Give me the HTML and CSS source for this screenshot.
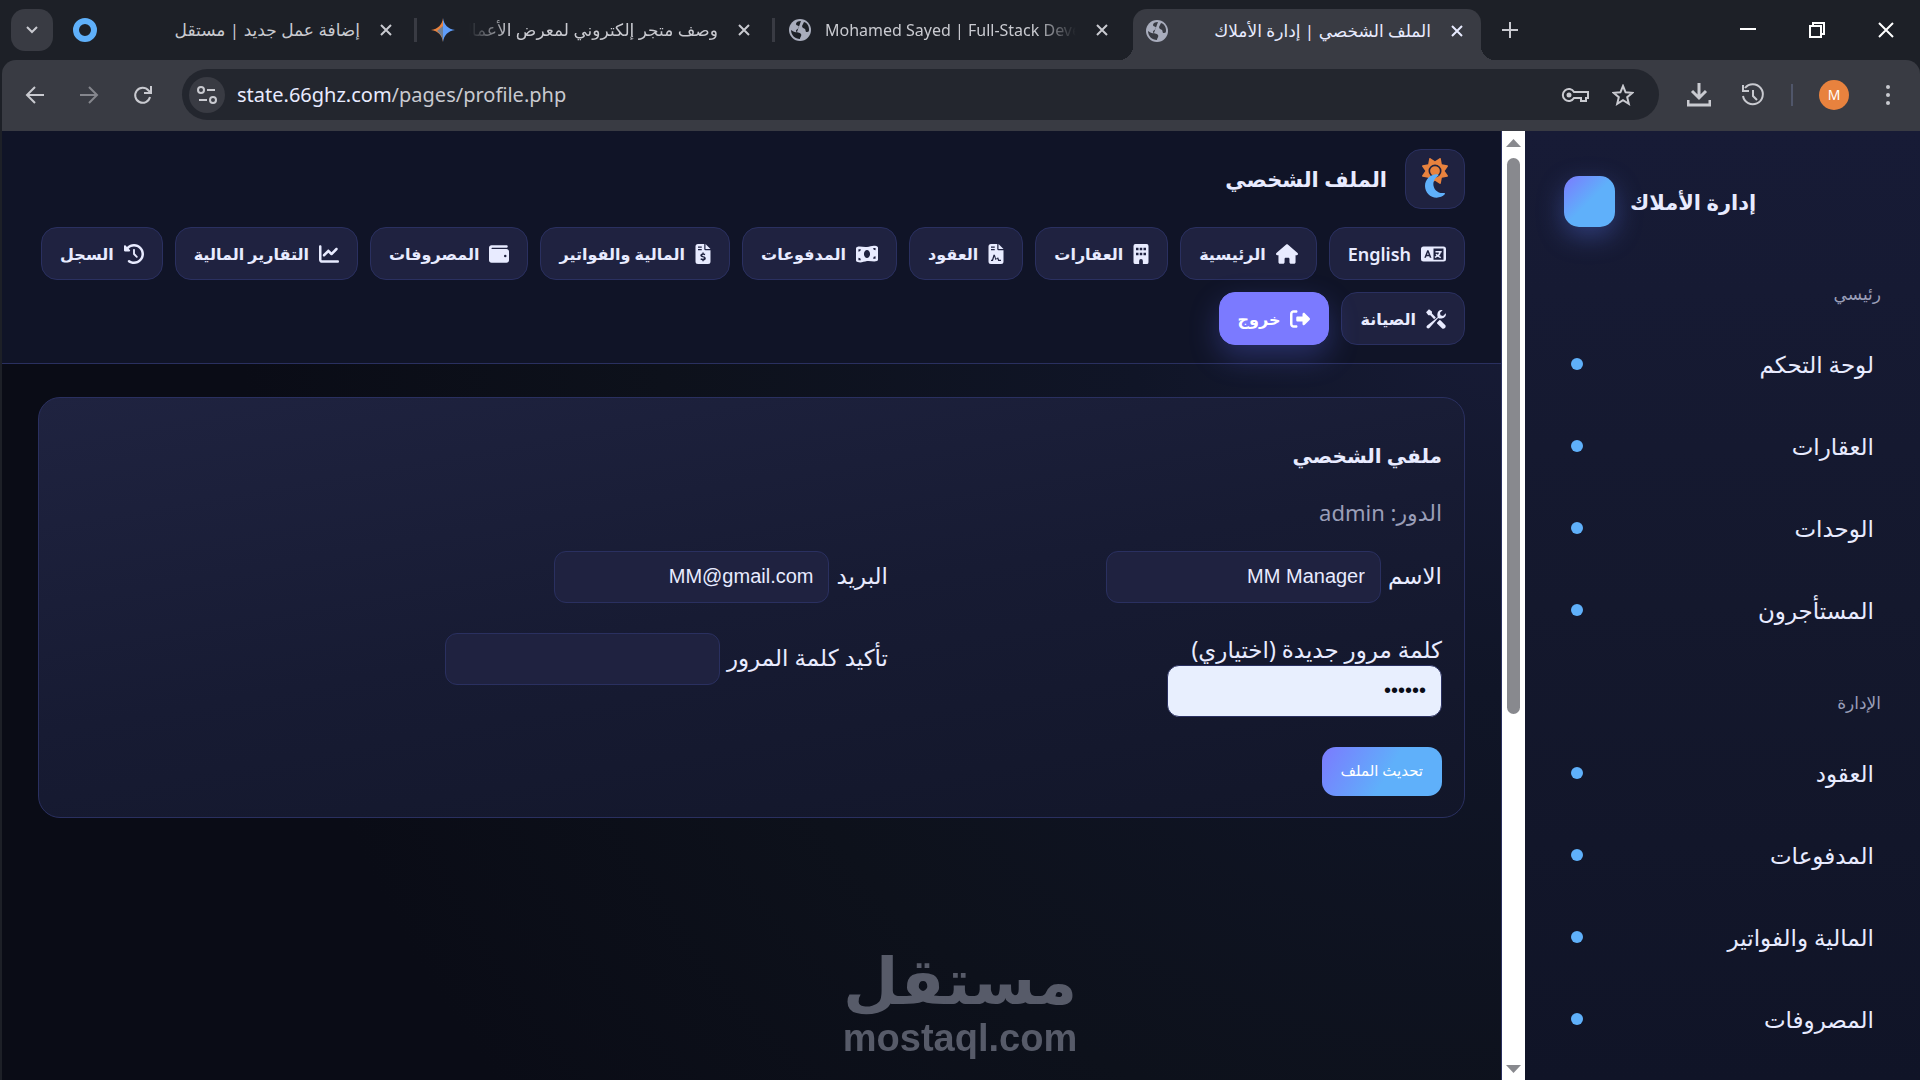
FILE: index.html
```
<!DOCTYPE html>
<html lang="ar">
<head>
    <meta charset="UTF-8">
    <meta name="viewport" content="width=device-width, initial-scale=1.0">
    <title>الملف الشخصي | إدارة الأملاك</title>
    <link rel="stylesheet" href="styles.css">
</head>
<body>
    <div class="tab-strip">
        <button class="tab-search" aria-label="Search tabs"><svg width="12" height="8" viewBox="0 0 12 8"><path d="M1 1l5 5 5-5" class="line"/></svg></button>
        <div class="tab">
            <svg class="favicon" width="24" height="24" viewBox="0 0 24 24"><circle cx="12" cy="12" r="9" fill="none" stroke="#5fb0fa" stroke-width="6"/></svg>
            <span class="tab-title" dir="rtl">إضافة عمل جديد | مستقل</span>
            <button class="tab-close" aria-label="Close"><svg width="12" height="12" viewBox="0 0 12 12"><path d="M1 1l10 10M11 1L1 11" class="line"/></svg></button>
        </div>
        <div class="tab divided">
            <svg class="favicon" width="24" height="24" viewBox="0 0 24 24"><path d="M12 0c1 7 5 11 12 12-7 1-11 5-12 12z" fill="#5f9dfa"/><path d="M12 0C11 7 7 11 0 12c7 1 11 5 12 12z" fill="#e8823e"/><path d="M6 13l6-5v16c-.6-5-2.500-8.500-6-11z" fill="#6e7f94"/></svg>
            <span class="tab-title fade-left" dir="rtl">وصف متجر إلكتروني لمعرض الأعمال</span>
            <button class="tab-close" aria-label="Close"><svg width="12" height="12" viewBox="0 0 12 12"><path d="M1 1l10 10M11 1L1 11" class="line"/></svg></button>
        </div>
        <div class="tab divided">
            <svg class="favicon" width="22" height="22" viewBox="0 0 22 22"><circle cx="11" cy="11" r="11" fill="#a9adbd"/><path d="M12 2c-3 0-5 1-5 3s3 1 3 3-3 2-3 4 4 1 5 3-1 3-1 5c-5 0-9-4-9-9 2 1 4 3 6 2M13 7c0 2 2 2 3 3s0 3 2 3 2-1 2-3-1-6-5-7z" fill="#1d2027"/></svg>
            <span class="tab-title fade-right">Mohamed Sayed | Full-Stack Developer</span>
            <button class="tab-close" aria-label="Close"><svg width="12" height="12" viewBox="0 0 12 12"><path d="M1 1l10 10M11 1L1 11" class="line"/></svg></button>
        </div>
        <div class="tab active">
            <svg class="favicon" width="22" height="22" viewBox="0 0 22 22"><circle cx="11" cy="11" r="11" fill="#a9adbd"/><path d="M12 2c-3 0-5 1-5 3s3 1 3 3-3 2-3 4 4 1 5 3-1 3-1 5c-5 0-9-4-9-9 2 1 4 3 6 2M13 7c0 2 2 2 3 3s0 3 2 3 2-1 2-3-1-6-5-7z" fill="#393b43"/></svg>
            <span class="tab-title" dir="rtl">الملف الشخصي | إدارة الأملاك</span>
            <button class="tab-close" aria-label="Close"><svg width="12" height="12" viewBox="0 0 12 12"><path d="M1 1l10 10M11 1L1 11" class="line"/></svg></button>
        </div>
        <button class="tab-new" aria-label="New tab"><svg width="16" height="16" viewBox="0 0 16 16"><path d="M8 0v16M0 8h16" class="line"/></svg></button>
        <div class="window-buttons">
            <button aria-label="Minimize"><svg width="16" height="16" viewBox="0 0 16 16"><path d="M0 7h16" class="line"/></svg></button>
            <button aria-label="Restore"><svg width="16" height="16" viewBox="0 0 16 16"><path d="M1 4h11v11H1zM4 4V1h11v11h-3" class="line"/></svg></button>
            <button aria-label="Close window"><svg width="16" height="16" viewBox="0 0 16 16"><path d="M1 1l14 14M15 1L1 15" class="line"/></svg></button>
        </div>
    </div>

    <div class="toolbar">
        <button class="tool" aria-label="Back"><svg width="20" height="20" viewBox="0 0 20 20"><path d="M19 10H2M10 2l-8 8 8 8" class="line"/></svg></button>
        <button class="tool dim" aria-label="Forward"><svg width="20" height="20" viewBox="0 0 20 20"><path d="M1 10h17M10 2l8 8-8 8" class="line"/></svg></button>
        <button class="tool" aria-label="Reload"><svg width="20" height="20" viewBox="0 0 20 20"><path d="M17 12a7.500 7.500 0 1 1-1.500-6.500L18 8M18 1v7h-7" class="line"/></svg></button>
        <div class="omnibox">
            <button class="site-info" aria-label="Site information"><svg width="20" height="20" viewBox="0 0 20 20"><circle cx="4" cy="5" r="3" class="line"/><circle cx="16" cy="15" r="3" class="line"/><path d="M10 5h8M2 15h8" class="line"/></svg></button>
            <span class="url">state.66ghz.com<span>/pages/profile.php</span></span>
            <button class="tool" aria-label="Passwords"><svg width="28" height="20" viewBox="0 0 28 20"><path d="M13 7h14v6h-2v3h-5v-3h-7a6 6 0 1 1 0-6z" class="line"/><circle cx="8" cy="10" r="2.500" fill="currentColor"/></svg></button>
            <button class="tool" aria-label="Bookmark"><svg width="22" height="22" viewBox="0 0 22 22"><path d="M11 2l2.600 6.300 6.800.5-5.200 4.400 1.600 6.600L11 16.200l-5.800 3.600 1.600-6.600L1.600 8.800l6.800-.5z" class="line"/></svg></button>
        </div>
        <button class="tool" aria-label="Downloads"><svg width="24" height="24" viewBox="0 0 24 24"><path d="M12 0v14M5 8l7 7 7-7M1 17v5h22v-5" class="line thick"/></svg></button>
        <button class="tool" aria-label="History"><svg width="24" height="24" viewBox="0 0 24 24"><path d="M4 5a10 10 0 1 1-2 8M2 2v6h6M12 7v6l4 4" class="line"/></svg></button>
        <span class="tool-divider"></span>
        <button class="avatar">M</button>
        <button class="tool" aria-label="Menu"><svg width="6" height="22" viewBox="0 0 6 22"><circle cx="3" cy="3" r="2" fill="currentColor"/><circle cx="3" cy="11" r="2" fill="currentColor"/><circle cx="3" cy="19" r="2" fill="currentColor"/></svg></button>
    </div>

    <div class="app" dir="rtl">
        <aside class="sidebar">
            <div class="brand">
                <span class="brand-name">إدارة الأملاك</span>
                <span class="brand-logo"></span>
            </div>
            <nav>
                <h3>رئيسي</h3>
                <a href="#">لوحة التحكم</a>
                <a href="#">العقارات</a>
                <a href="#">الوحدات</a>
                <a href="#">المستأجرون</a>
                <h3>الإدارة</h3>
                <a href="#">العقود</a>
                <a href="#">المدفوعات</a>
                <a href="#">المالية والفواتير</a>
                <a href="#">المصروفات</a>
            </nav>
        </aside>

        <div class="scrollbar">
            <svg width="15" height="8" viewBox="0 0 15 8"><path d="M0 8l7.500-8L15 8z" fill="#88898e"/></svg>
            <div class="track"><div class="thumb"></div></div>
            <svg width="15" height="8" viewBox="0 0 15 8"><path d="M0 0l7.500 8L15 0z" fill="#88898e"/></svg>
        </div>

        <main class="main">
            <header class="topbar">
                <div class="topbar-title">
                    <button class="theme-toggle" aria-label="Theme">
                        <svg width="30" height="42" viewBox="0 0 30 42">
                            <svg x="2" y="0" width="26" height="26" viewBox="0 0 512 512"><path fill="#e8823e" d="M361.500 1.200c5 2.100 8.600 6.600 9.600 11.900L391 121l107.900 19.800c5.300 1 9.800 4.600 11.900 9.600s1.500 10.700-1.600 15.200L446.900 256l62.300 90.300c3.100 4.500 3.700 10.200 1.600 15.200s-6.600 8.600-11.900 9.600L391 391l-19.900 107.900c-1 5.300-4.600 9.800-9.600 11.900s-10.700 1.500-15.200-1.600L256 446.900l-90.300 62.300c-4.500 3.100-10.200 3.700-15.200 1.600s-8.600-6.600-9.600-11.900L121 391 13.100 371.100c-5.300-1-9.800-4.600-11.900-9.600s-1.500-10.700 1.600-15.200L65.100 256 2.800 165.700c-3.100-4.500-3.700-10.200-1.600-15.200s6.600-8.600 11.900-9.600L121 121 140.900 13.100c1-5.300 4.600-9.800 9.600-11.900s10.700-1.500 15.200 1.600L256 65.100l90.300-62.300c4.500-3.100 10.200-3.700 15.200-1.600zM160 256a96 96 0 1 1 192 0 96 96 0 1 1-192 0zm224 0a128 128 0 1 0-256 0 128 128 0 1 0 256 0z"/></svg>
                            <svg x="5" y="16" width="20" height="24" viewBox="0 32 384 448"><path fill="#5fb0fa" d="M223.500 32C100 32 0 132.300 0 256s100 224 223.500 224c60.600 0 115.500-24.200 155.800-63.400c5-4.900 6.300-12.500 3.100-18.700s-10.100-9.700-17-8.500c-9.800 1.700-19.800 2.600-30.100 2.600c-96.900 0-175.500-78.800-175.500-176c0-65.800 36-123.100 89.300-153.300c6.100-3.500 9.200-10.500 7.700-17.300s-7.300-11.900-14.300-12.500c-6.300-.5-12.600-.8-19-.8z"/></svg>
                        </svg>
                    </button>
                    <h1>الملف الشخصي</h1>
                </div>
                <nav class="menu">
                    <a href="#" lang="en"><svg width="25" height="20" viewBox="0 0 640 512"><path fill-rule="evenodd" d="M64 64h512q64 0 64 64v256q0 64-64 64H64q-64 0-64-64V128q0-64 64-64zm256 48v288h256V112zM160 160L84 350h42l14-38h72l14 38h42l-76-190zm16 56l22 60h-44z"/><path d="M370 180h160v36h-20c-8 40-26 66-48 88l54 26-18 34-72-38-62 34-18-34 50-26-26-28 28-24 30 30c16-16 26-34 32-62h-90z"/></svg>English</a>
                    <a href="#"><svg width="22" height="20" viewBox="0 0 576 512"><path d="M575.800 255.500c0 18-15 32.100-32 32.100h-32l.7 160.200V472c0 22.100-18 40-40 40h-80c-22.100 0-40-17.900-40-40v-88c0-17.700-14.300-32-32-32h-64c-17.700 0-32 14.300-32 32v88c0 22.100-17.900 40-40 40h-80c-22.100 0-40-17.900-40-40V287.600H32c-18 0-32-14-32-32.100 0-9 3-17 10-24L266.400 8c7-7 15-8 22-8s15 2 21 7l255.400 224.500c8 7 12 15 11 24z"/></svg>الرئيسية</a>
                    <a href="#"><svg width="16" height="20" viewBox="0 0 384 512"><path fill-rule="evenodd" d="M48 0h288q48 0 48 48v416q0 48-48 48h-96v-80q0-48-48-48t-48 48v80H48q-48 0-48-48V48Q0 0 48 0zm16 96v64h64V96zm96 0v64h64V96zm96 0v64h64V96zM64 224v64h64v-64zm96 0v64h64v-64zm96 0v64h64v-64z"/></svg>العقارات</a>
                    <a href="#"><svg width="16" height="20" viewBox="0 0 384 512"><path fill-rule="evenodd" d="M64 0h160v128q0 32 32 32h128v288q0 64-64 64H64q-64 0-64-64V64Q0 0 64 0zm0 64v32h96V64zm0 64v32h96v-32zm64 144l-38 128H64v32h50l36-110 26 90 50-34 22 54h72v-32h-50l-24-58-54 34-28-104z"/><path d="M256 0v128h128z"/></svg>العقود</a>
                    <a href="#"><svg width="22" height="20" viewBox="0 0 576 512"><path fill-rule="evenodd" d="M0 112q0-30 28-40c87-32 173 16 260 0s150-52 245-26q43 12 43 42v314q0 30-28 40c-87 32-173-16-260 0S138 494 43 468Q0 456 0 426zm288 40c-44 0-80 46-80 104s36 104 80 104 80-46 80-104-36-104-80-104zM64 130v64q64 0 64-64zm0 288h64q0-64-64-64zM512 96h-64q0 64 64 64zm0 222q-64 0-64 64h64z"/></svg>المدفوعات</a>
                    <a href="#"><svg width="16" height="20" viewBox="0 0 384 512"><path fill-rule="evenodd" d="M64 0h160v128q0 32 32 32h128v288q0 64-64 64H64q-64 0-64-64V64Q0 0 64 0zm0 64v32h96V64zm0 64v32h96v-32zm112 88v24c-76 14-66 88 8 100 48 8 36 40 4 38-18 0-36-8-50-14l-10 36q22 10 48 16v28h34v-26c78-16 68-92-8-106-46-8-34-34-4-34q20 0 42 10l10-36q-20-8-40-12v-24z"/><path d="M256 0v128h128z"/></svg>المالية والفواتير</a>
                    <a href="#"><svg width="20" height="20" viewBox="0 0 512 512"><path fill-rule="evenodd" d="M64 32C28.700 32 0 60.700 0 96v320c0 35.300 28.700 64 64 64h384c35.300 0 64-28.700 64-64V192c0-35.300-28.700-64-64-64H80c-8.800 0-16-7.200-16-16s7.200-16 16-16h368c17.700 0 32-14.300 32-32s-14.300-32-32-32H64zm352 240a32 32 0 1 1 0 64 32 32 0 1 1 0-64z"/></svg>المصروفات</a>
                    <a href="#"><svg width="20" height="20" viewBox="0 0 512 512"><path d="M64 64c0-17.700-14.300-32-32-32S0 46.300 0 64v336c0 44.200 35.800 80 80 80h400c17.700 0 32-14.300 32-32s-14.300-32-32-32H80c-8.800 0-16-7.200-16-16V64zm406.600 86.600c12.500-12.500 12.500-32.800 0-45.300s-32.800-12.500-45.300 0L320 210.700l-57.400-57.400c-12.500-12.500-32.800-12.500-45.300 0l-112 112c-12.500 12.500-12.500 32.800 0 45.300s32.800 12.500 45.300 0L240 221.300l57.400 57.400c12.500 12.500 32.800 12.500 45.300 0l128-128z"/></svg>التقارير المالية</a>
                    <a href="#"><svg width="20" height="20" viewBox="0 0 512 512"><path d="M75 75L41 41C25.900 25.900 0 36.600 0 57.900V168c0 13.300 10.700 24 24 24h110.100c21.400 0 32.100-25.900 17-41l-30.800-30.800C155 85.500 203 64 256 64c106 0 192 86 192 192s-86 192-192 192c-40.800 0-78.600-12.700-109.700-34.400-14.500-10.100-34.400-6.600-44.600 7.900s-6.600 34.400 7.900 44.600C151.200 495 201.700 512 256 512c141.400 0 256-114.600 256-256S397.400 0 256 0C185.300 0 121.300 28.700 75 75zm181 53c-13.300 0-24 10.700-24 24v104c0 6.400 2.500 12.500 7 17l72 72c9.400 9.400 24.600 9.400 33.900 0s9.400-24.600 0-33.900l-65-65V152c0-13.300-10.700-24-24-24z"/></svg>السجل</a>
                    <a href="#"><svg width="20" height="20" viewBox="0 0 512 512"><path d="M76 6l76 58v52l100 100-44 44L112 160H60L2 82zM300 210L30 420c-50 50 20 110 62 62l220-252 22 10c70 24 200-20 172-134l-70 70-64-14-14-64 70-70c-90-26-166 52-128 182zM280 350l66-66 24 4 126 126c30 46-30 110-82 82L284 370z"/></svg>الصيانة</a>
                    <a href="#" class="logout"><svg width="20" height="20" viewBox="0 0 512 512"><path d="M377.900 105.900l122.800 122.800c7.200 7.200 11.300 17.100 11.300 27.300s-4.100 20.100-11.300 27.300L377.900 406.100c-6.400 6.400-15 9.900-24 9.900-18.700 0-33.900-15.200-33.900-33.900V320H192c-17.700 0-32-14.300-32-32v-64c0-17.700 14.300-32 32-32h128v-62.100c0-18.700 15.200-33.900 33.900-33.900 9 0 17.600 3.600 24 9.900zM160 96H96c-17.700 0-32 14.300-32 32v256c0 17.700 14.300 32 32 32h64c17.700 0 32 14.300 32 32s-14.300 32-32 32H96c-53 0-96-43-96-96V128C0 75 43 32 96 32h64c17.700 0 32 14.300 32 32s-14.300 32-32 32z"/></svg>خروج</a>
                </nav>
            </header>

            <section class="card">
                <h2>ملفي الشخصي</h2>
                <p class="role">الدور: admin</p>
                <form class="profile-form">
                    <div class="field">
                        <label for="name">الاسم</label>
                        <input type="text" id="name" value="MM Manager">
                    </div>
                    <div class="field">
                        <label for="email">البريد</label>
                        <input type="text" id="email" value="MM@gmail.com">
                    </div>
                    <div class="field stacked">
                        <label for="password">كلمة مرور جديدة (اختياري)</label>
                        <input type="password" id="password" class="autofilled" value="123456">
                    </div>
                    <div class="field">
                        <label for="confirm">تأكيد كلمة المرور</label>
                        <input type="password" id="confirm">
                    </div>
                    <div class="field">
                        <button type="button" class="submit">تحديث الملف</button>
                    </div>
                </form>
            </section>
        </main>
    </div>

    <div class="watermark">
        <span class="watermark-ar">مستقل</span>
        <span class="watermark-en">mostaql.com</span>
    </div>
</body>
</html>
```
FILE: styles.css
```
* {
    box-sizing: border-box;
}
body {
    margin: 0;
    height: 100vh;
    display: flex;
    flex-direction: column;
    overflow: hidden;
    background: #1d2027;
    color: #e8ebff;
    font-family: "Noto Sans", "DejaVu Sans", sans-serif;
}
button {
    border: none;
    padding: 0;
    background: none;
    color: inherit;
    font: inherit;
    cursor: pointer;
}
a {
    color: inherit;
    text-decoration: none;
}
svg {
    display: block;
    flex: none;
}
.line {
    fill: none;
    stroke: currentColor;
    stroke-width: 2;
}
.thick {
    stroke-width: 3;
}

/* browser window */
.tab-strip {
    display: flex;
    align-items: flex-start;
    height: 60px;
    flex: none;
    padding: 9px 0 0 11px;
    color: #c9cad0;
}
.tab-search {
    width: 42px;
    height: 42px;
    margin-right: 3px;
    border-radius: 14px;
    background: #393b43;
    display: flex;
    align-items: center;
    justify-content: center;
}
.tab {
    display: flex;
    align-items: center;
    flex: 0 1 358px;
    min-width: 0;
    height: 42px;
    padding: 0 22px 0 17px;
    position: relative;
}
.divided::before {
    content: "";
    position: absolute;
    left: 0;
    top: 9px;
    width: 3px;
    height: 24px;
    background: #393b43;
}
.tab-title {
    flex: 1;
    min-width: 0;
    margin: 0 20px 0 14px;
    font-size: 17px;
    line-height: 26px;
    white-space: nowrap;
    overflow: hidden;
}
.fade-left {
    mask-image: linear-gradient(to right, transparent, #000 40px);
}
.fade-right {
    font-size: 16px;
    mask-image: linear-gradient(to left, transparent, #000 40px);
}
.active {
    height: 51px;
    flex-basis: 348px;
    margin-left: 3px;
    padding: 0 18px 8px 13px;
    border-radius: 14px 14px 0 0;
    background: #393b43;
    color: #e8ebff;
}
.active::before,
.active::after {
    content: "";
    position: absolute;
    bottom: 0;
    width: 14px;
    height: 14px;
}
.active::before {
    left: -14px;
    background: radial-gradient(circle at 0 0, transparent 14px, #393b43 14px);
}
.active::after {
    right: -14px;
    background: radial-gradient(circle at 100% 0, transparent 14px, #393b43 14px);
}
.tab-new {
    margin: 13px 0 0 21px;
}
.window-buttons {
    display: flex;
    margin-left: auto;
    color: #fff;
}
.window-buttons button {
    width: 69px;
    height: 42px;
    display: flex;
    align-items: center;
    justify-content: center;
}
.toolbar {
    display: flex;
    align-items: center;
    gap: 30px;
    height: 71px;
    flex: none;
    margin-left: 2px;
    padding: 0 29px 2px 21px;
    border-radius: 14px 14px 0 0;
    background: #393b43;
    color: #c9cad0;
}
.tool {
    min-width: 24px;
    display: flex;
    justify-content: center;
}
.toolbar > .tool:last-child {
    min-width: 6px;
}
.dim {
    color: #85868d;
}
.omnibox {
    flex: 1;
    display: flex;
    align-items: center;
    gap: 22px;
    height: 51px;
    margin: 0 -2px 0 -3px;
    padding: 0 24px 0 7px;
    border-radius: 26px;
    background: #23262e;
}
.site-info {
    width: 36px;
    height: 36px;
    border-radius: 50%;
    background: #393b43;
    display: flex;
    align-items: center;
    justify-content: center;
}
.url {
    flex: 1;
    margin-left: -10px;
    font-size: 20px;
    color: #e8ebff;
}
.url span {
    color: #c9cad0;
}
.tool-divider {
    width: 2px;
    height: 22px;
    margin: 0 -4px;
    background: #50566a;
}
.avatar {
    width: 30px;
    height: 30px;
    border-radius: 50%;
    background: #e8823e;
    color: #fff;
    font-size: 14px;
    margin-right: 6px;
}

/* app layout */
.app {
    flex: 1;
    min-height: 0;
    display: flex;
    margin-left: 2px;
    background: #0a0c16;
}
.sidebar {
    width: 395px;
    flex: none;
    padding: 45px 39px 0;
    overflow: hidden;
    background: linear-gradient(#171b36, #14182d 50%, #101427);
}
.brand {
    display: flex;
    align-items: center;
    justify-content: flex-end;
    gap: 15px;
    margin-bottom: 49px;
}
.brand-name {
    font-size: 21px;
    font-weight: bold;
}
.brand-logo {
    width: 51px;
    height: 51px;
    border-radius: 15px;
    background: linear-gradient(135deg, #7b7aff, #5fb0fa 50%);
    box-shadow: 0 9px 27px rgba(95, 125, 250, 0.35);
}
.sidebar h3 {
    margin: 0 0 17px;
    font-size: 17px;
    line-height: 36px;
    font-weight: normal;
    color: #9a9eb8;
}
.sidebar a + h3 {
    margin-top: 40px;
}
.sidebar a {
    display: flex;
    align-items: center;
    justify-content: space-between;
    height: 70px;
    margin-bottom: 12px;
    padding: 0 7px;
    font-size: 23px;
}
.sidebar a::after {
    content: "";
    width: 12px;
    height: 12px;
    border-radius: 50%;
    background: #5fb0fa;
}
.scrollbar {
    width: 23px;
    flex: none;
    display: flex;
    flex-direction: column;
    align-items: center;
    padding: 8px 0 7px;
    background: #fff;
}
.track {
    flex: 1;
    width: 13px;
    padding: 11px 0;
}
.thumb {
    height: 62%;
    border-radius: 7px;
    background: #88898e;
}
.main {
    flex: 1;
    min-width: 0;
    border-right: 1px solid #2a3060;
    background: radial-gradient(circle at 100% 20%, #171b36, #101527 22%, #0d111b 50%, transparent 75%), #0a0c16;
}
.topbar {
    padding: 18px 36px;
    border-bottom: 1px solid #2a3060;
    background: #101427;
}
.topbar-title {
    display: flex;
    align-items: center;
    gap: 18px;
    margin-bottom: 18px;
}
.theme-toggle {
    width: 60px;
    height: 60px;
    border: 1px solid #2a3060;
    border-radius: 16px;
    background: #1f2240;
    display: flex;
    align-items: center;
    justify-content: center;
}
h1 {
    margin: 0;
    font-size: 21px;
}
.menu {
    display: flex;
    flex-wrap: wrap;
    gap: 12px;
}
.menu a {
    display: flex;
    align-items: center;
    gap: 10px;
    height: 53px;
    padding: 0 18px;
    border: 1px solid #2a3060;
    border-radius: 16px;
    background: #1f2240;
    font-size: 16px;
    font-weight: 600;
}
.menu a:lang(en) {
    font-size: 18px;
}
.menu svg {
    fill: currentColor;
}
.menu .logout {
    border-color: #7b7aff;
    background: #7b7aff;
    color: #fff;
    box-shadow: 0 12px 30px rgba(95, 110, 250, 0.3);
}

/* profile card */
.card {
    margin: 33px 36px;
    padding: 38px 22px 21px;
    border: 1px solid #2a3060;
    border-radius: 22px;
    background: linear-gradient(170deg, #1f2340, #171b33 50%, #121629);
}
h2 {
    margin: 0;
    font-size: 20px;
    line-height: 40px;
}
.role {
    margin: 18px 0 21px;
    font-size: 22px;
    line-height: 36px;
    color: #9a9eb8;
}
.profile-form {
    display: grid;
    grid-template-columns: 1fr 1fr;
    gap: 30px;
    max-width: 1078px;
    font-size: 23px;
}
.field {
    display: flex;
    align-items: flex-start;
    gap: 7px;
}
.field label {
    line-height: 48px;
}
.field input {
    width: 275px;
    height: 52px;
    padding: 0 15px 2px;
    border: 1px solid #2a3060;
    border-radius: 12px;
    background: #1f2240;
    color: #e8ebff;
    font-family: "Liberation Sans", sans-serif;
    font-size: 20px;
}
.stacked {
    flex-direction: column;
    gap: 0;
}
.field.stacked label {
    line-height: 32px;
}
.field .autofilled {
    background: #e8effe;
    color: #0a0c16;
}
.submit {
    height: 49px;
    padding: 0 19px 3px;
    border-radius: 14px;
    background: linear-gradient(120deg, #7b7aff, #5fb0fa 55%);
    color: #fff;
    font-size: 15px;
}

.watermark {
    position: fixed;
    left: 50%;
    bottom: 22px;
    transform: translateX(-50%);
    display: flex;
    flex-direction: column;
    align-items: center;
    color: #575b69;
    font-weight: bold;
}
.watermark-ar {
    font-size: 64px;
    line-height: 76px;
}
.watermark-en {
    font-family: "Liberation Sans", sans-serif;
    font-size: 38px;
    line-height: 40px;
}
```
